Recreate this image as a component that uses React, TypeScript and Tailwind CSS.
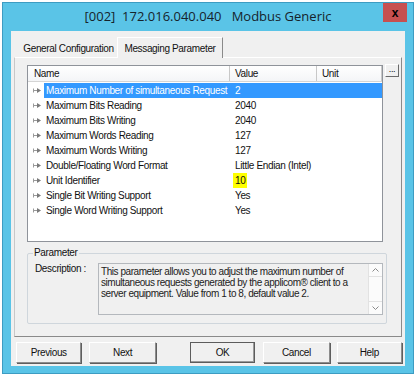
import React from "react";

interface row {
    name: string,
    value: string,
    selected?: boolean,
    mark?: boolean
}

const rows: row[] = [
    { name: "Maximum Number of simultaneous Request", value: "2", selected: true },
    { name: "Maximum Bits Reading", value: "2040" },
    { name: "Maximum Bits Writing", value: "2040" },
    { name: "Maximum Words Reading", value: "127" },
    { name: "Maximum Words Writing", value: "127" },
    { name: "Double/Floating Word Format", value: "Little Endian (Intel)" },
    { name: "Unit Identifier", value: "10", mark: true },
    { name: "Single Bit Writing Support", value: "Yes" },
    { name: "Single Word Writing Support", value: "Yes" },
];

function RowArrow() {
    return (
        <svg width="8" height="5" viewBox="0 0 8 5" className="shrink-0">
            <path d="M0.5 0.5V4.5" stroke="#9a9a9a" strokeWidth="1" />
            <path d="M0 2.5H4" stroke="#9a9a9a" strokeWidth="1" />
            <path d="M4 0L8 2.5L4 5Z" fill="#7a7a7a" />
        </svg>
    );
}

function Chevron({ up }: { up?: boolean }) {
    return (
        <svg width="7" height="4" viewBox="0 0 7 4">
            <path d={up ? "M0.5 3.5L3.5 0.5L6.5 3.5" : "M0.5 0.5L3.5 3.5L6.5 0.5"} stroke="#8a8a8a" strokeWidth="1" fill="none" />
        </svg>
    );
}

function DlgButton({ label, def, className }: { label: string, def?: boolean, className?: string }) {
    return (
        <button
            className={`h-[21px] bg-[#f0f0f0] text-[10px] text-[#111] flex items-center justify-center ${def ? "border border-[#5c5c5c] shadow-[inset_-1px_-1px_0_#9a9a9a]" : "border border-t-white border-l-white border-r-[#8c8c8c] border-b-[#8c8c8c] shadow-[1px_1px_0_#5e5e5e]"} ${className ?? ""}`}
        >
            {label}
        </button>
    );
}

export default function App() {
    return (
        <div className="w-[416px] h-[375px] bg-white pt-[2px] pl-[2px] font-['Liberation_Sans',Arial,sans-serif] tracking-[-0.35px] overflow-hidden">
            <div className="w-[412px] h-[372px] bg-[#5ac4e7] border border-[#3d9cc2] flex flex-col px-[8px] pb-[7px]">
                {/* title bar */}
                <div className="h-[28px] shrink-0 relative flex items-center justify-center">
                    <span className="font-['Open_Sans',sans-serif] text-[13px] tracking-normal text-[#16232b] whitespace-pre">[002]  172.016.040.040   Modbus Generic</span>
                    <div className="absolute right-[-2px] top-0 w-[24px] h-[19px] bg-[#c75050] flex items-center justify-center text-black font-bold text-[12px] leading-none">x</div>
                </div>

                {/* client */}
                <div className="flex-1 bg-[#f0f0f0] flex flex-col px-[3px] pt-[6px]">
                    {/* tabs */}
                    <div className="flex items-end pl-[6px] h-[20px] shrink-0">
                        <div className="w-[97px] h-[17px] flex items-center justify-center text-[10px] text-[#111]">General Configuration</div>
                        <div className="w-[106px] h-[21px] -mb-[1px] relative z-10 bg-[#f0f0f0] border-t border-l border-white border-r border-r-[#8a8a8a] flex items-center justify-center text-[10px] text-[#111]">Messaging Parameter</div>
                    </div>

                    {/* tab page */}
                    <div className="h-[280px] shrink-0 border border-t-white border-l-[#c8c8c8] border-r-[#8a8a8a] border-b-[#8a8a8a] pl-[12px] pt-[7px] flex flex-col">
                        <div className="flex items-start">
                            <div className="w-[356px] h-[177px] bg-white border border-[#8f939a] flex flex-col">
                                <div className="h-[16px] shrink-0 flex text-[10px] text-[#111] bg-gradient-to-b from-white to-[#f4f5f7] border-b border-[#d5d5d5]">
                                    <div className="w-[202px] pl-[6px] border-r border-[#c8c8c8] flex items-center">Name</div>
                                    <div className="w-[87px] pl-[5px] border-r border-[#c8c8c8] flex items-center">Value</div>
                                    <div className="flex-1 pl-[5px] border-r border-[#c8c8c8] flex items-center">Unit</div>
                                </div>
                                <div className="pt-[1px] flex flex-col">
                                    {rows.map((r, i) => (
                                        <div key={i} className="h-[15px] flex items-center text-[10px]">
                                            <div className="w-[16px] pl-[5px] shrink-0 flex items-center">
                                                <RowArrow />
                                            </div>
                                            <div className={`flex-1 h-full flex items-center ${r.selected ? "bg-[#3399ff] text-white" : "text-[#111]"}`}>
                                                <div className="w-[186px] pl-[2px] whitespace-nowrap overflow-hidden">{r.name}</div>
                                                <div className="pl-[5px] h-full flex items-center whitespace-nowrap">
                                                    {r.mark ? (
                                                        <span className="-ml-[2px] px-[2px] h-full flex items-center bg-[#ffff00]">{r.value}</span>
                                                    ) : r.value}
                                                </div>
                                            </div>
                                        </div>
                                    ))}
                                </div>
                            </div>
                            <button className="ml-[2px] -mt-[1px] w-[14px] h-[13px] bg-[#f0f0f0] border border-t-white border-l-white border-r-[#6a6a6a] border-b-[#6a6a6a] text-[9px] leading-none text-black flex items-end justify-center pb-[2px]">...</button>
                        </div>

                        {/* parameter group */}
                        <div className="relative mt-[11px] w-[360px] h-[71px] border border-[#cfd6dc] rounded-[2px] pt-[9px] flex">
                            <span className="absolute -top-[7px] left-[5px] px-[1px] bg-[#f0f0f0] text-[10px] text-[#111] leading-[12px]">Parameter</span>
                            <div className="w-[70px] pl-[7px] text-[10px] text-[#111] leading-[12px] whitespace-nowrap">Description :</div>
                            <div className="w-[285px] h-[52px] border border-[#b4b8bd] bg-[#f0f0f0] flex">
                                <div className="flex-1 pl-[2px] pt-[2px] text-[10px] leading-[11px] tracking-[-0.45px] text-[#222] whitespace-nowrap">
                                    This parameter allows you to adjust the maximum number of<br />
                                    simultaneous requests generated by the applicom® client to a<br />
                                    server equipment. Value from 1 to 8, default value 2.
                                </div>
                                <div className="w-[14px] bg-[#fbfbfb] border-l border-[#e2e2e2] flex flex-col">
                                    <div className="h-[13px] flex items-center justify-center border-b border-[#e2e2e2]"><Chevron up /></div>
                                    <div className="flex-1" />
                                    <div className="h-[13px] flex items-center justify-center border-t border-[#e2e2e2]"><Chevron /></div>
                                </div>
                            </div>
                        </div>
                    </div>

                    {/* buttons */}
                    <div className="flex mt-[5px] pl-[2px]">
                        <DlgButton label="Previous" className="w-[66px]" />
                        <DlgButton label="Next" className="w-[67px] ml-[8px]" />
                        <DlgButton label="OK" def className="w-[66px] ml-[34px]" />
                        <DlgButton label="Cancel" className="w-[67px] ml-[8px]" />
                        <DlgButton label="Help" className="w-[66px] ml-[7px]" />
                    </div>
                </div>
            </div>
        </div>
    );
}
